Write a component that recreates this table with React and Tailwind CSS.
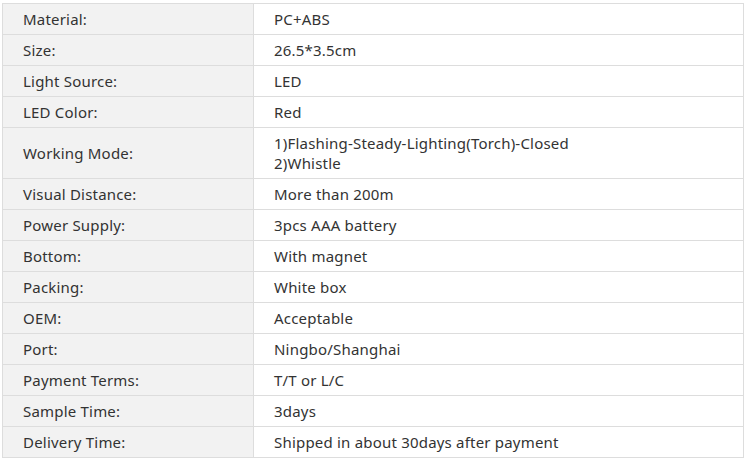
import React from "react";

const rows = [
  ["Material:", ["PC+ABS"]],
  ["Size:", ["26.5*3.5cm"]],
  ["Light Source:", ["LED"]],
  ["LED Color:", ["Red"]],
  ["Working Mode:", ["1)Flashing-Steady-Lighting(Torch)-Closed", "2)Whistle"]],
  ["Visual Distance:", ["More than 200m"]],
  ["Power Supply:", ["3pcs AAA battery"]],
  ["Bottom:", ["With magnet"]],
  ["Packing:", ["White box"]],
  ["OEM:", ["Acceptable"]],
  ["Port:", ["Ningbo/Shanghai"]],
  ["Payment Terms:", ["T/T or L/C"]],
  ["Sample Time:", ["3days"]],
  ["Delivery Time:", ["Shipped in about 30days after payment"]],
];

const App = () => {
  return (
    <div
      className="bg-white w-[747px] h-[459px] pt-[3px] pl-[2px] text-[#333] text-[15px] tracking-[0.2px]"
      style={{ fontFamily: '"Noto Sans", "Open Sans", sans-serif' }}
    >
      <table className="w-[742px] border-collapse">
        <tbody>
          {rows.map(([label, value]) => (
            <tr key={label}>
              <td className="w-[251px] border border-[#dddddd] bg-[#f2f2f2] px-5 py-[5px] leading-5 align-middle">
                {label}
              </td>
              <td className="border border-[#dddddd] bg-white px-5 py-[5px] leading-5 align-middle">
                {value.map((line) => (
                  <div key={line}>{line}</div>
                ))}
              </td>
            </tr>
          ))}
        </tbody>
      </table>
    </div>
  );
};

export default App;
